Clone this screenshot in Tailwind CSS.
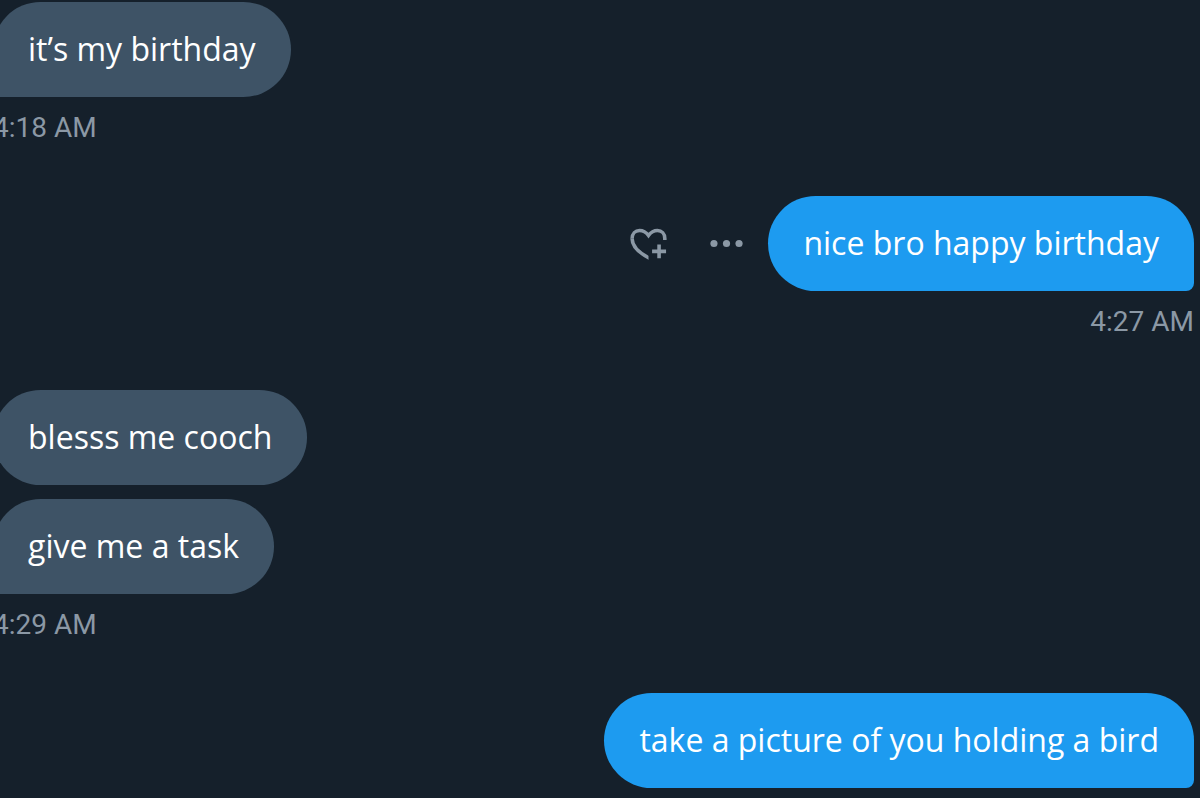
<!DOCTYPE html>
<html lang="en">
<head>
    <meta charset="UTF-8">
    <meta name="viewport" content="width=device-width, initial-scale=1.0">
    <title>Messages</title>
    <script src="https://cdn.jsdelivr.net/npm/@tailwindcss/browser@4"></script>
</head>
<body class="bg-[#15202b] font-['Open_Sans',sans-serif] overflow-hidden">
    <main class="-ml-[7px] mr-[6px] pt-[2px] pb-[10px] flex flex-col gap-[50px] text-[32px] leading-[47px] text-white">
        <!-- Received -->
        <section class="flex flex-col items-start">
            <p class="rounded-[48px] rounded-bl-[8px] bg-[#3e5366] px-[35px] pt-[23px] pb-[25px]">it’s my birthday</p>
            <time class="mt-[13px] text-[28px] leading-9 text-[#8b98a5] font-['Roboto',sans-serif]">4:18 AM</time>
        </section>

        <!-- Sent, with message actions -->
        <section class="flex flex-col items-end">
            <div class="flex items-center">
                <button type="button" aria-label="Add reaction" class="mr-[35px] text-[#8b98a5]">
                    <svg class="size-[43px]" viewBox="0 0 24 24" fill="none" stroke="currentColor" stroke-width="2">
                        <clipPath id="heart-left"><path d="M0 0h12v24H0z" /></clipPath>
                        <path d="M21.1 10V9.2C21.1 6.5 19.3 4.75 17 4.75c-2 0-3.6.9-5 2.75-1.4-1.85-3-2.75-5-2.75C4.7 4.75 2.85 6.5 2.85 9.35" />
                        <path clip-path="url(#heart-left)" d="M2.85 9.3C2.85 13.1 6.2 16.8 12 19.9l1.5.8" />
                        <path d="M17.9 12.5v7.8M14 16.4h7.8" />
                    </svg>
                </button>
                <button type="button" aria-label="More" class="mr-5 text-[#8b98a5]">
                    <svg class="size-[43px]" viewBox="0 0 24 24" fill="currentColor">
                        <circle cx="5" cy="12" r="2" />
                        <circle cx="12" cy="12" r="2" />
                        <circle cx="19" cy="12" r="2" />
                    </svg>
                </button>
                <p class="rounded-[48px] rounded-br-[8px] bg-[#1d9bf0] px-[35px] pt-[23px] pb-[25px]">nice bro happy birthday</p>
            </div>
            <time class="mt-[13px] text-[28px] leading-9 text-[#8b98a5] font-['Roboto',sans-serif]">4:27 AM</time>
        </section>

        <!-- Received -->
        <section class="flex flex-col items-start">
            <p class="rounded-[48px] bg-[#3e5366] px-[35px] pt-[23px] pb-[25px]">blesss me cooch</p>
            <p class="mt-[14px] rounded-[48px] rounded-bl-[8px] bg-[#3e5366] px-[35px] pt-[23px] pb-[25px]">give me a task</p>
            <time class="mt-[13px] text-[28px] leading-9 text-[#8b98a5] font-['Roboto',sans-serif]">4:29 AM</time>
        </section>

        <!-- Sent -->
        <section class="flex flex-col items-end">
            <p class="rounded-[48px] rounded-br-[8px] bg-[#1d9bf0] px-[35px] pt-[23px] pb-[25px]">take a picture of you holding a bird</p>
        </section>
    </main>
</body>
</html>
